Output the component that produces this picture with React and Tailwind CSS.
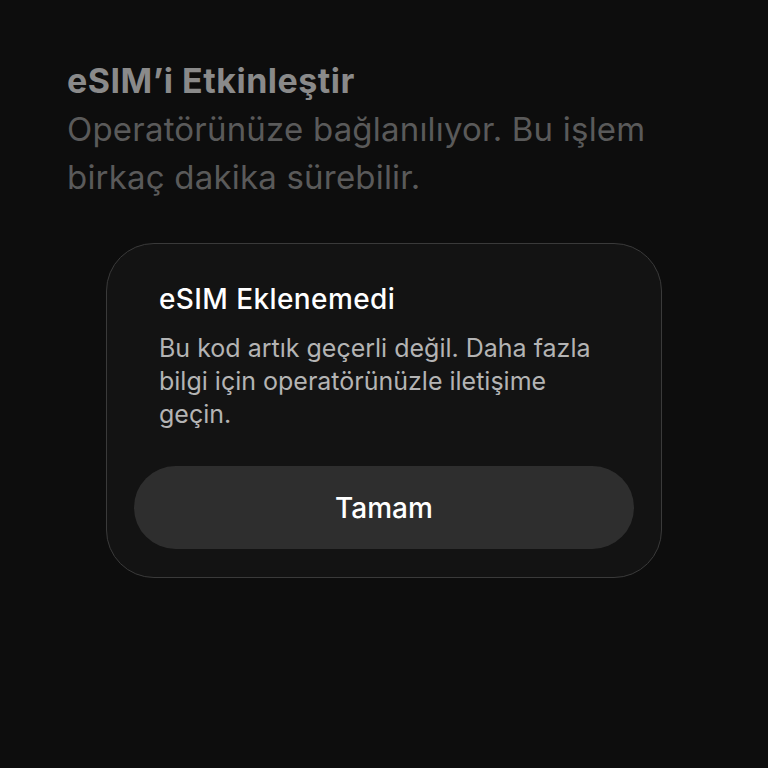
import React from "react";

export default function App() {
    return (
        <div
            className="w-full h-[768px] bg-[#0d0d0d] overflow-hidden"
            style={{ fontFamily: "Inter, 'Noto Sans', sans-serif" }}
        >
            {/* Background screen header */}
            <div className="pl-[67px] pt-[57px]">
                <h1 className="text-[34px] leading-[48px] font-bold text-[#8a8a8a] tracking-[0.5px]">
                    eSIM’i Etkinleştir
                </h1>
                <p className="text-[33px] leading-[48px] text-[#5a5a5a] tracking-[0.2px]">
                    Operatörünüze bağlanılıyor. Bu işlem
                    <br />
                    birkaç dakika sürebilir.
                </p>
            </div>

            {/* Alert */}
            <div className="mt-[42px] ml-[106px] w-[556px] rounded-[48px] border border-[#3a3a3a] bg-[#131313] pt-[39px] pb-[28px] px-[27px]">
                <div className="px-[25px]">
                    <h2 className="text-[28px] leading-[32px] font-medium text-white tracking-[0.4px]">
                        eSIM Eklenemedi
                    </h2>
                    <p className="mt-[17px] text-[25px] leading-[33px] text-[#b4b4b4]">
                        Bu kod artık geçerli değil. Daha fazla
                        <br />
                        bilgi için operatörünüzle iletişime
                        <br />
                        geçin.
                    </p>
                </div>
                <button className="mt-[35px] w-full h-[83px] rounded-full bg-[#2e2e2e] text-white text-[28px] font-medium">
                    Tamam
                </button>
            </div>
        </div>
    );
}
